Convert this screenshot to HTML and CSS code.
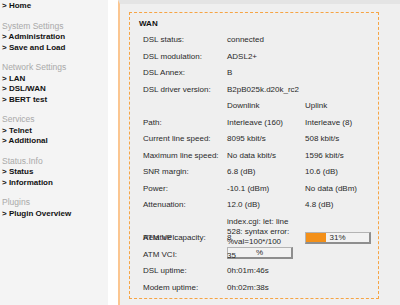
FILE: index.html
```html
<!DOCTYPE html>
<html lang="en">
<head>
  <meta charset="UTF-8" />
  <title>Status - DSL/WAN</title>
  <link rel="stylesheet" href="styles.css">
</head>
<body>
  <div class="menu">
    <a class="item" href="#">&gt; Home</a>

    <div class="group">System Settings</div>
    <a class="item" href="#">&gt; Administration</a>
    <a class="item" href="#">&gt; Save and Load</a>

    <div class="group">Network Settings</div>
    <a class="item" href="#">&gt; LAN</a>
    <a class="item" href="#">&gt; DSL/WAN</a>
    <a class="item" href="#">&gt; BERT test</a>

    <div class="group">Services</div>
    <a class="item" href="#">&gt; Telnet</a>
    <a class="item" href="#">&gt; Additional</a>

    <div class="group">Status.Info</div>
    <a class="item" href="#">&gt; Status</a>
    <a class="item" href="#">&gt; Information</a>

    <div class="group">Plugins</div>
    <a class="item" href="#">&gt; Plugin Overview</a>
  </div>

  <div class="content">
    <div class="box">
      <div class="box-title">WAN</div>

      <div class="stats">
        <div class="lbl">DSL status:</div>
        <div class="val">connected</div>

        <div class="lbl">DSL modulation:</div>
        <div class="val">ADSL2+</div>

        <div class="lbl">DSL Annex:</div>
        <div class="val">B</div>

        <div class="lbl">DSL driver version:</div>
        <div class="val">B2pB025k.d20k_rc2</div>

        <div class="lbl"></div>
        <div class="val">Downlink</div>
        <div class="val">Uplink</div>

        <div class="lbl">Path:</div>
        <div class="val">Interleave (160)</div>
        <div class="val">Interleave (8)</div>

        <div class="lbl">Current line speed:</div>
        <div class="val">8095 kbit/s</div>
        <div class="val">508 kbit/s</div>

        <div class="lbl">Maximum line speed:</div>
        <div class="val">No data kbit/s</div>
        <div class="val">1596 kbit/s</div>

        <div class="lbl">SNR margin:</div>
        <div class="val">6.8 (dB)</div>
        <div class="val">10.6 (dB)</div>

        <div class="lbl">Power:</div>
        <div class="val">-10.1 (dBm)</div>
        <div class="val">No data (dBm)</div>

        <div class="lbl">Attenuation:</div>
        <div class="val">12.0 (dB)</div>
        <div class="val">4.8 (dB)</div>

        <!-- broken row: capacity, VPI and VCI end up on top of each other -->
        <div class="lbl rel-lbl">Relative capacity:</div>
        <div class="rel-down">
          <div class="err">index.cgi: let: line 528: syntax error: %val=100*/100</div>
          <div class="bar"><span class="bar-text">%</span></div>
        </div>
        <div class="rel-up">
          <div class="bar">
            <div class="bar-fill" style="width: 31%"></div>
            <span class="bar-text">31%</span>
          </div>
        </div>
        <div class="lbl vpi-lbl">ATM VPI:</div>
        <div class="val vpi-val">8</div>
        <div class="lbl vci-lbl">ATM VCI:</div>
        <div class="val vci-val">35</div>

        <div class="lbl">DSL uptime:</div>
        <div class="val">0h:01m:46s</div>

        <div class="lbl">Modem uptime:</div>
        <div class="val">0h:02m:38s</div>
      </div>
    </div>
  </div>
</body>
</html>
```

FILE: styles.css
```css
html, body {
  height: 100%;
}

body {
  margin: 0;
  display: flex;
  background: #ffffff;
  font-family: "Liberation Sans", Arial, sans-serif;
  font-size: 8px;
  color: #2a2a2a;
  overflow: hidden;
}

/* left menu */
.menu {
  width: 106px;
  padding: 1px 0 0 2px;
  margin-right: 10px;
  background: #f4f4f4;
  display: flex;
  flex-direction: column;
  align-items: flex-start;
}

.menu .item {
  font-weight: bold;
  font-size: 8px;
  line-height: 10.5px;
  color: #111;
  text-decoration: none;
}

.menu .group {
  margin-top: 8px;
  margin-bottom: 0.5px;
  font-size: 8.5px;
  line-height: 12px;
  color: #a9a9a9;
}

/* main area */
.content {
  flex: 1;
  border-left: 2px solid #fbc691;
  border-top: 4px solid #e4e4e4;
  background: #efefef;
  padding: 8px 21px 0 9px;
}

.box {
  border: 1px dashed #f6a444;
  padding: 6px 0 2px 9px;
}

.box-title {
  font-weight: bold;
  line-height: 10px;
  color: #111;
  margin-bottom: 3px;
}

.stats {
  margin-left: 4px;
  display: grid;
  grid-template-columns: 84px 78px auto;
  grid-auto-rows: 16.5px;
  align-items: center;
}

.lbl {
  grid-column: 1;
  white-space: nowrap;
  line-height: 10px;
}

.val {
  white-space: nowrap;
  line-height: 10px;
}

.rel-lbl {
  grid-row: 12 / span 3;
}

.rel-down {
  grid-column: 2;
  grid-row: 12 / span 3;
}

.rel-up {
  grid-column: 3;
  grid-row: 12 / span 3;
}

.vpi-lbl, .vpi-val {
  grid-row: 13;
}

.vci-lbl, .vci-val {
  grid-row: 14;
}

.vpi-val, .vci-val {
  grid-column: 2;
  position: relative;
  z-index: 1;
}

.vci-val {
  margin-top: 2px;
}

.err {
  width: 72px;
  line-height: 10px;
}

.bar {
  position: relative;
  box-sizing: border-box;
  width: 66px;
  height: 12px;
  border: 1px solid #b4b4b4;
  border-right: 2px solid #8e8e8e;
  border-bottom: 2px solid #8e8e8e;
  background: #f2f2f2;
}

.bar-fill {
  height: 100%;
  background: #f39019;
}

.bar-text {
  position: absolute;
  left: 0;
  right: 0;
  top: 0;
  line-height: 10px;
  text-align: center;
}
```
